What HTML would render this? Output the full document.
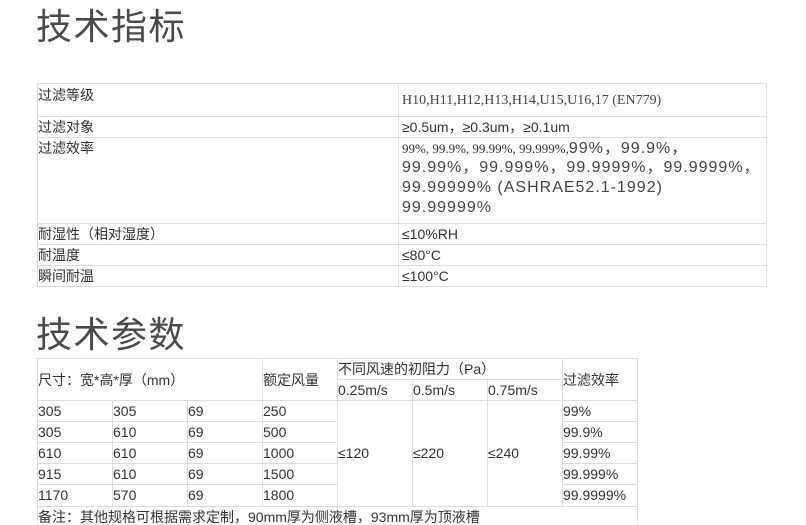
<!DOCTYPE html>
<html><head><meta charset="utf-8"><style>
body{margin:0;width:806px;height:522px;background:#fff;overflow:hidden;position:relative;font-family:"Liberation Sans","Noto Sans CJK SC",sans-serif;color:#333;font-size:14px}
.h{position:absolute;left:36px;font-size:36px;color:#4a4a4a;line-height:1;font-family:"Liberation Sans","Noto Sans CJK SC",sans-serif;letter-spacing:1.5px}
.l{position:absolute;background:#dcdcdc}
.t{position:absolute;white-space:nowrap;line-height:16px}
.big{font-size:16px;letter-spacing:1px;line-height:20px;color:#444}
</style></head><body>
<div class="h" style="top:9px">技术指标</div>
<div class="h" style="top:317px">技术参数</div>

<!-- table 1 -->
<div class="l" style="left:37px;top:83px;width:730px;height:1px"></div>
<div class="l" style="left:37px;top:116px;width:730px;height:1px"></div>
<div class="l" style="left:37px;top:137px;width:730px;height:1px"></div>
<div class="l" style="left:37px;top:223px;width:730px;height:1px"></div>
<div class="l" style="left:37px;top:244px;width:730px;height:1px"></div>
<div class="l" style="left:37px;top:265px;width:730px;height:1px"></div>
<div class="l" style="left:37px;top:286px;width:730px;height:1px"></div>
<div class="l" style="left:37px;top:83px;width:1px;height:204px"></div>
<div class="l" style="left:398px;top:83px;width:1px;height:204px"></div>
<div class="l" style="left:766px;top:83px;width:1px;height:204px"></div>

<div class="t" style="left:38px;top:87px">过滤等级</div>
<div class="t" style="left:402px;top:93px;font-family:'Liberation Serif',serif;color:#444;font-size:14px">H10,H11,H12,H13,H14,U15,U16,17 (EN779)</div>
<div class="t" style="left:38px;top:119px">过滤对象</div>
<div class="t" style="left:402px;top:119px">≥0.5um，≥0.3um，≥0.1um</div>
<div class="t" style="left:38px;top:140px">过滤效率</div>
<div class="t" style="left:402px;top:138px;line-height:20px"><span style="font-family:'Liberation Serif',serif;font-size:13px">99%, 99.9%, 99.99%, 99.999%,</span><span class="big">99%，99.9%，</span></div>
<div class="t big" style="left:402px;top:158px">99.99%，99.999%，99.9999%，99.9999%，</div>
<div class="t big" style="left:402px;top:178px">99.99999% (ASHRAE52.1-1992)</div>
<div class="t big" style="left:402px;top:198px">99.99999%</div>
<div class="t" style="left:38px;top:226px">耐湿性（相对湿度）</div>
<div class="t" style="left:402px;top:226px">≤10%RH</div>
<div class="t" style="left:38px;top:247px">耐温度</div>
<div class="t" style="left:402px;top:247px">≤80°C</div>
<div class="t" style="left:38px;top:268px">瞬间耐温</div>
<div class="t" style="left:402px;top:268px">≤100°C</div>

<!-- table 2 -->
<div class="l" style="left:37px;top:358px;width:601px;height:1px"></div>
<div class="l" style="left:337px;top:379px;width:225px;height:1px"></div>
<div class="l" style="left:37px;top:400px;width:601px;height:1px"></div>
<div class="l" style="left:37px;top:421px;width:300px;height:1px"></div>
<div class="l" style="left:37px;top:442px;width:300px;height:1px"></div>
<div class="l" style="left:37px;top:463px;width:300px;height:1px"></div>
<div class="l" style="left:37px;top:484px;width:300px;height:1px"></div>
<div class="l" style="left:562px;top:421px;width:76px;height:1px"></div>
<div class="l" style="left:562px;top:442px;width:76px;height:1px"></div>
<div class="l" style="left:562px;top:463px;width:76px;height:1px"></div>
<div class="l" style="left:562px;top:484px;width:76px;height:1px"></div>
<div class="l" style="left:37px;top:506px;width:601px;height:1px"></div>
<div class="l" style="left:37px;top:358px;width:1px;height:164px"></div>
<div class="l" style="left:112px;top:400px;width:1px;height:106px"></div>
<div class="l" style="left:187px;top:400px;width:1px;height:106px"></div>
<div class="l" style="left:262px;top:358px;width:1px;height:148px"></div>
<div class="l" style="left:337px;top:358px;width:1px;height:148px"></div>
<div class="l" style="left:412px;top:379px;width:1px;height:127px"></div>
<div class="l" style="left:487px;top:379px;width:1px;height:127px"></div>
<div class="l" style="left:562px;top:358px;width:1px;height:148px"></div>
<div class="l" style="left:637px;top:358px;width:1px;height:164px"></div>

<div class="t" style="left:38px;top:372px">尺寸：宽*高*厚（mm）</div>
<div class="t" style="left:263px;top:372px">额定风量</div>
<div class="t" style="left:338px;top:361px">不同风速的初阻力（Pa）</div>
<div class="t" style="left:338px;top:382px">0.25m/s</div>
<div class="t" style="left:413px;top:382px">0.5m/s</div>
<div class="t" style="left:488px;top:382px">0.75m/s</div>
<div class="t" style="left:563px;top:372px">过滤效率</div>

<div class="t" style="left:38px;top:403px">305</div><div class="t" style="left:113px;top:403px">305</div><div class="t" style="left:188px;top:403px">69</div><div class="t" style="left:263px;top:403px">250</div><div class="t" style="left:563px;top:403px">99%</div>
<div class="t" style="left:38px;top:424px">305</div><div class="t" style="left:113px;top:424px">610</div><div class="t" style="left:188px;top:424px">69</div><div class="t" style="left:263px;top:424px">500</div><div class="t" style="left:563px;top:424px">99.9%</div>
<div class="t" style="left:38px;top:445px">610</div><div class="t" style="left:113px;top:445px">610</div><div class="t" style="left:188px;top:445px">69</div><div class="t" style="left:263px;top:445px">1000</div><div class="t" style="left:563px;top:445px">99.99%</div>
<div class="t" style="left:38px;top:466px">915</div><div class="t" style="left:113px;top:466px">610</div><div class="t" style="left:188px;top:466px">69</div><div class="t" style="left:263px;top:466px">1500</div><div class="t" style="left:563px;top:466px">99.999%</div>
<div class="t" style="left:38px;top:487px">1170</div><div class="t" style="left:113px;top:487px">570</div><div class="t" style="left:188px;top:487px">69</div><div class="t" style="left:263px;top:487px">1800</div><div class="t" style="left:563px;top:487px">99.9999%</div>
<div class="t" style="left:338px;top:445px">≤120</div>
<div class="t" style="left:413px;top:445px">≤220</div>
<div class="t" style="left:488px;top:445px">≤240</div>
<div class="t" style="left:38px;top:509px">备注：其他规格可根据需求定制，90mm厚为侧液槽，93mm厚为顶液槽</div>
</body></html>
